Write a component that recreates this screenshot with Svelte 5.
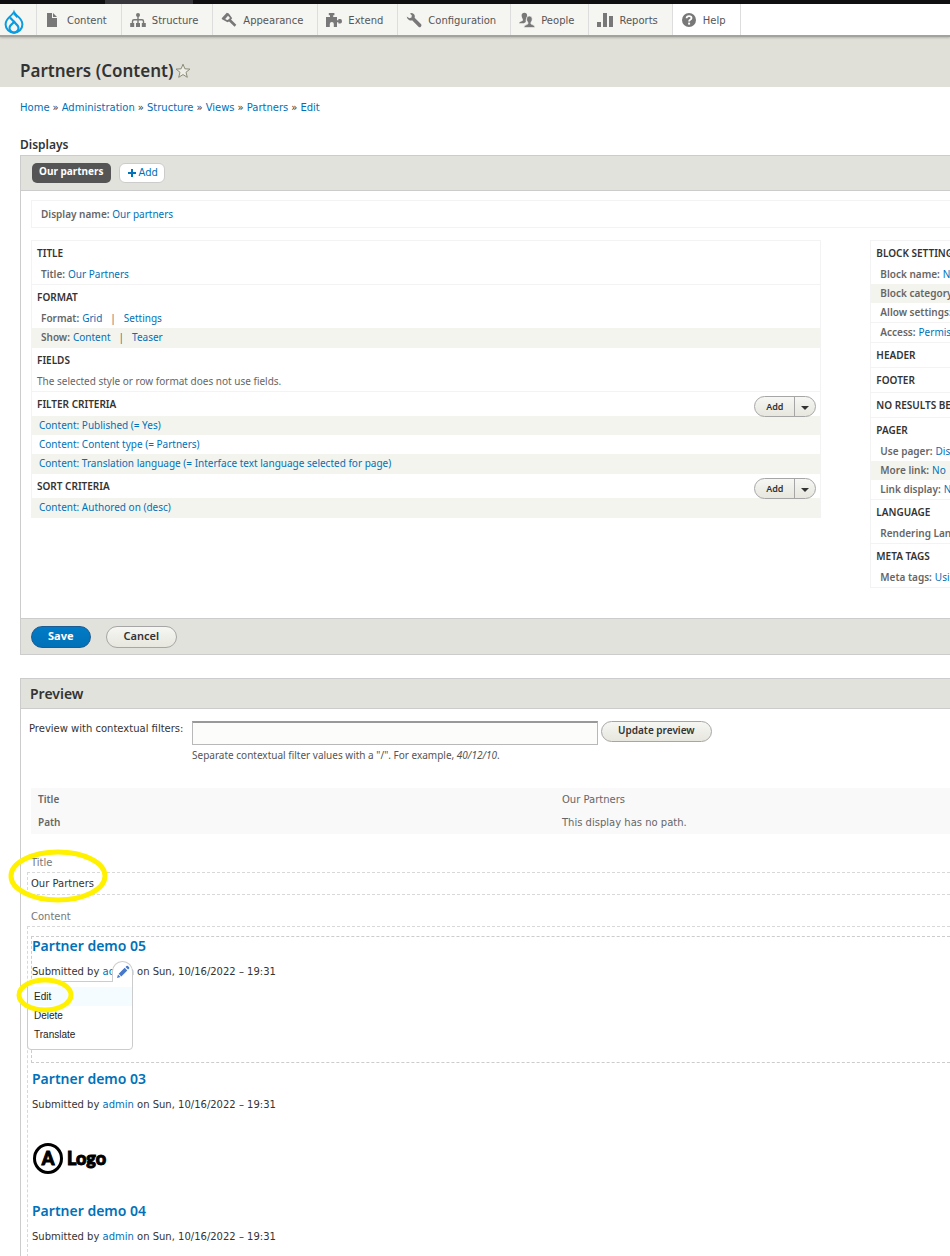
<script>
  const menu = [
    { label: 'Content', icon: 'content' },
    { label: 'Structure', icon: 'structure' },
    { label: 'Appearance', icon: 'appearance' },
    { label: 'Extend', icon: 'extend' },
    { label: 'Configuration', icon: 'configuration' },
    { label: 'People', icon: 'people' },
    { label: 'Reports', icon: 'reports' },
    { label: 'Help', icon: 'help' }
  ];

  const crumbs = ['Home', 'Administration', 'Structure', 'Views', 'Partners', 'Edit'];

  const mainBuckets = [
    { title: 'Title', rows: [{ label: 'Title:', links: ['Our Partners'] }] },
    {
      title: 'Format',
      rows: [
        { label: 'Format:', links: ['Grid', 'Settings'] },
        { label: 'Show:', links: ['Content', 'Teaser'], shaded: true }
      ]
    },
    { title: 'Fields', rows: [{ text: 'The selected style or row format does not use fields.' }] },
    {
      title: 'Filter criteria',
      add: true,
      rows: [
        { links: ['Content: Published (= Yes)'], shaded: true },
        { links: ['Content: Content type (= Partners)'] },
        { links: ['Content: Translation language (= Interface text language selected for page)'], shaded: true }
      ]
    },
    { title: 'Sort criteria', add: true, rows: [{ links: ['Content: Authored on (desc)'], shaded: true }] }
  ];

  const sideBuckets = [
    {
      title: 'Block settings',
      rows: [
        { label: 'Block name:', links: ['None'] },
        { label: 'Block category:', links: ['Lists (Views)'], shaded: true },
        { label: 'Allow settings:', links: ['Items per page'] },
        { label: 'Access:', links: ['Permission'], ruled: true }
      ]
    },
    { title: 'Header', rows: [] },
    { title: 'Footer', rows: [] },
    { title: 'No results behavior', rows: [] },
    {
      title: 'Pager',
      rows: [
        { label: 'Use pager:', links: ['Display all items'] },
        { label: 'More link:', links: ['No'], shaded: true },
        { label: 'Link display:', links: ['None'] }
      ]
    },
    { title: 'Language', rows: [{ label: 'Rendering Language:', links: ['Content language'] }] },
    { title: 'Meta tags', rows: [{ label: 'Meta tags:', links: ['Using defaults'] }] }
  ];

  const submitted = 'on Sun, 10/16/2022 – 19:31';
  let filterValue = $state('');
</script>

{#snippet glyph(name)}
  <svg class="glyph" viewBox="0 0 16 16" width="16" height="16" aria-hidden="true">
    {#if name === 'content'}
      <path d="M2 1h5v5h5v9H2z M8 1l4 4H8z" />
    {:else if name === 'structure'}
      <circle cx="8" cy="3" r="2" />
      <path d="M7.300 4h1.400v3h3.300q2.200 0 2.200 2.200V11h-1.400V9.500q0-1-1-1H8.700V11H7.300V8.500H4.200q-1 0-1 1V11H1.800V9.200Q1.800 7 4 7h3.300z" />
      <path d="M.2 11h4v4h-4zM6 11h4v4H6zM11.800 11h4v4h-4z" />
    {:else if name === 'appearance'}
      <path d="M.7 6.200 5.800.8l2 .7 3.400 4.700-1.200 1.300 5.300 5.300-1.700 1.900-5.500-5.300-1.600.8L1 7.200z" />
      <path d="M4.200 7 7 3.800l2 2.200-2.200 2.100-1.400-.3z" fill="#f5f5f2" />
    {:else if name === 'extend'}
      <path d="M0 5h4V3.200H2.800V1h5.600v2.200H7.200V5H11v3.200h1.400V7h1.800q1.800 0 1.800 2.200 0 2.300-1.800 2.300h-1.800v-1.300H11V15H7.800v-3q0-2-2-2t-2 2v3H0z" />
    {:else if name === 'configuration'}
      <path d="M5.200.9q3.200.3 3.600 3 .1 1-.2 1.800l6.600 6.600q.8 1.800-.6 2.700-1 .6-2.100-.3L6.100 8.300Q4.600 8.900 3 8 .9 6.800.7 4.600l2.700 1.700 2.100-.8.3-2.200L4 1.700z" />
    {:else if name === 'people'}
      <path d="M5.400.7q2.700 0 2.700 2.700 0 1.400-.8 2.500-1 2.100-.5 4l-1.900 1.300H0q.2-1.300 3.300-2.300.8-.4.6-1.500-1.400-2-1.300-4.200Q2.700.7 5.400.7z" />
      <path d="M10.300 4q2.900 0 2.900 3 0 1.800-1.200 3.200-.4 1.700.3 2 3.700.8 3.700 3.300H4.900q0-2.300 3.600-3.200.8-.4.3-2.100Q7.500 8.700 7.500 7q0-3 2.800-3z" stroke="#f5f5f2" stroke-width=".6" />
    {:else if name === 'reports'}
      <path d="M0 10h4v5H0zM6 1h4v14H6zM12 4h4v11h-4z" />
    {:else}
      <circle cx="8" cy="8" r="7" />
      <path d="M5.600 6.300q0-2.200 2.500-2.200 2.400 0 2.400 1.900 0 1.200-1.300 1.800-1.100.6-1.100 1.700" fill="none" stroke="#fff" stroke-width="1.800" />
      <path d="M7.100 10.600h2v2h-2z" fill="#fff" />
    {/if}
  </svg>
{/snippet}

{#snippet bucket(b)}
  <section class="bucket">
    <div class="bucket-head">
      <h3>{b.title}</h3>
      {#if b.add}
        <div class="dropbutton">
          <button type="button">Add</button>
          <button type="button" class="toggle" aria-label="List additional actions"><i></i></button>
        </div>
      {/if}
    </div>
    {#each b.rows as r}
      <div class="row" class:shaded={r.shaded} class:ruled={r.ruled} class:labelled={r.label} class:plain={r.text}>
        {#if r.label}<span class="label">{r.label}</span>{/if}
        {#if r.text}{r.text}{/if}
        {#each r.links ?? [] as l, i}
          {#if i}<span class="bar">|</span>{/if}<a href="#top">{l}</a>
        {/each}
      </div>
    {/each}
  </section>
{/snippet}

<div class="page" id="top">
  <div class="strip"><span></span></div>
  <nav class="toolbar">
    <a class="home" href="#top" aria-label="Drupal">
      <svg viewBox="0 0 20 25" width="20" height="25">
        <path d="M10 .5C9.400 3.200 7.300 5 4.900 7.300 2.600 9.600.6 12 .6 15.400a9.400 9.300 0 0 0 18.800 0c0-3.400-2-5.800-4.300-8.100C12.700 5 10.600 3.200 10 .5z" fill="#0a9be0" />
        <path d="M10 4.500 5.800 8.900C3.800 11 2.600 12.800 2.600 15.400a7.400 7.300 0 0 0 14.800 0c0-2.600-1.200-4.400-3.200-6.500z" fill="#f5f5f2" />
        <path d="m6 8.500 7.500 8a4.400 4.300 0 1 1-7 0L11 12" fill="none" stroke="#0a9be0" stroke-width="2.200" />
        <path d="m10 4.500 3.500 3.800" stroke="#0a9be0" stroke-width="2" />
      </svg>
    </a>
    {#each menu as m}
      <a href="#top" class:open={m.icon === 'help'}>{@render glyph(m.icon)}<span>{m.label}</span></a>
    {/each}
  </nav>

  <header>
    <h1>Partners (Content)</h1>
    <button type="button" class="star" aria-label="Add to shortcuts">
      <svg viewBox="0 0 16 16" width="16" height="16">
        <path d="m8 1.200 1.900 4.600 5 .3-3.900 3.200 1.300 5L8 11.600l-4.300 2.700 1.300-5L1.100 6.100l5-.3z" fill="#eeeee6" stroke="#8c8b78" stroke-linejoin="round" />
      </svg>
    </button>
  </header>

  <main>
    <nav class="crumbs">
      {#each crumbs as c, i}{#if i}<span>»</span>{/if}<a href="#top">{c}</a>{/each}
    </nav>

    <h2 class="displays">Displays</h2>
    <div class="panel">
      <div class="tabs">
        <button type="button" class="tab">Our partners</button>
        <button type="button" class="tab-add">
          <svg viewBox="0 0 8 8" width="8" height="8" aria-hidden="true"><path d="M3 0h2v3h3v2H5v3H3V5H0V3h3z" fill="#0073bb" /></svg>Add
        </button>
      </div>
      <div class="details">
        <div class="display-name"><span class="label">Display name:</span> <a href="#top">Our partners</a></div>
        <div class="columns">
          <div class="column">{#each mainBuckets as b}{@render bucket(b)}{/each}</div>
          <div class="column side">{#each sideBuckets as b}{@render bucket(b)}{/each}</div>
        </div>
      </div>
      <div class="actions">
        <button type="button" class="btn primary">Save</button>
        <button type="button" class="btn">Cancel</button>
      </div>
    </div>

    <div class="panel preview">
      <h2>Preview</h2>
      <form class="filters">
        <label for="args">Preview with contextual filters:</label>
        <div class="field">
          <input id="args" type="text" bind:value={filterValue} />
          <p>Separate contextual filter values with a "/". For example, <em>40/12/10</em>.</p>
        </div>
        <button type="button" class="btn update">Update preview</button>
      </form>

      <table>
        <tbody>
          <tr><th scope="row">Title</th><td>Our Partners</td></tr>
          <tr><th scope="row">Path</th><td>This display has no path.</td></tr>
        </tbody>
      </table>

      <div class="output">
        <div class="region">
          <h4>Title</h4>
          <div class="box title-box">Our Partners</div>
          <svg class="mark mark-title" viewBox="0 0 102 54" width="102" height="54" aria-hidden="true">
            <ellipse cx="51" cy="27" rx="47" ry="24" />
          </svg>
        </div>
        <div class="region">
          <h4>Content</h4>
          <div class="box content-box">
            <article class="active">
              <h3><a href="#top">Partner demo 05</a></h3>
              <p>Submitted by <a href="#top">admin</a> {submitted}</p>
              <div class="contextual">
                <button type="button" class="pencil" aria-label="Open configuration options">
                  <svg viewBox="0 0 14 14" width="14" height="14">
                    <path d="m1 13 1-3.500L4.500 12zM2.700 8.800 8.700 2.800l2.600 2.600-6 6zM9.500 2l1-1q.7-.6 1.400 0l1.200 1.200q.6.700 0 1.400l-1 1z" fill="#4678cc" />
                  </svg>
                </button>
                <ul>
                  <li class="hover"><a href="#top">Edit</a></li>
                  <li><a href="#top">Delete</a></li>
                  <li><a href="#top">Translate</a></li>
                </ul>
                <svg class="mark mark-edit" viewBox="0 0 58 36" width="58" height="36" aria-hidden="true">
                  <ellipse cx="29" cy="18" rx="26" ry="15" />
                </svg>
              </div>
            </article>
            <article>
              <h3><a href="#top">Partner demo 03</a></h3>
              <p>Submitted by <a href="#top">admin</a> {submitted}</p>
              <div class="logo">
                <span class="badge">A</span><span>Logo</span>
              </div>
            </article>
            <article class="last">
              <h3><a href="#top">Partner demo 04</a></h3>
              <p>Submitted by <a href="#top">admin</a> {submitted}</p>
            </article>
          </div>
        </div>
      </div>
    </div>
  </main>
</div>

<style>
  :global(body) {
    background: #fff;
  }
  .page {
    overflow: hidden;
    color: #333;
    font: 10px/20px 'DejaVu Sans', Verdana, sans-serif;
  }
  h1, h2, h3, h4, p, ul {
    margin: 0;
    padding: 0;
    font-weight: 600;
  }
  p, ul { font-weight: 400; }
  h1, h2, h3, .label, .btn, .tab, .dropbutton button, th {
    font-family: 'Noto Sans', 'Open Sans', sans-serif;
  }
  a {
    color: #0071b8;
    text-decoration: none;
  }
  button {
    margin: 0;
    padding: 0;
    border: 0;
    background: none;
    cursor: pointer;
  }

  .strip {
    height: 4px;
    padding-left: 105px;
    background: #0f0f11;
  }
  .strip span {
    display: block;
    width: 88px;
    height: 100%;
    background: #37373b;
  }
  .toolbar {
    position: relative;
    display: flex;
    height: 31px;
    background: #fff;
    box-shadow: 0 2px 0 #a3a39e, 0 3px 2px #b5b5ae;
  }
  .toolbar a {
    display: flex;
    align-items: center;
    gap: 6px;
    padding: 0 14px 0 8px;
    border-right: 1px solid #ddd;
    background: #f5f5f2;
    color: #565656;
  }
  .toolbar a span { padding-top: 2px; }
  .toolbar a.open { background: #fff; }
  .toolbar .home {
    width: 37px;
    box-sizing: border-box;
    padding: 3px 0 0 4px;
  }
  .glyph { fill: #787878; }

  header {
    display: flex;
    align-items: center;
    gap: 2px;
    padding: 24px 20px 4px;
    background: #e0e0d8;
  }
  h1 {
    font-size: 17px;
    line-height: 24px;
  }
  .star svg { display: block; }

  main { padding-left: 20px; }
  .crumbs {
    display: flex;
    gap: 3px;
    padding: 11px 0 17px;
  }
  .displays {
    font-size: 12px;
    line-height: 20px;
  }

  .panel {
    border: 1px solid #ccc;
    border-right: 0;
  }
  .tabs {
    display: flex;
    align-items: center;
    gap: 8px;
    padding: 7px 11px;
    border-bottom: 1px solid #ccc;
    background: #e1e2dc;
  }
  .tab {
    height: 20px;
    padding: 0 7px 3px;
    border-radius: 5px;
    background: #555;
    color: #fff;
    font-size: 10px;
    font-weight: 700;
    line-height: 17px;
  }
  .tab-add {
    display: flex;
    align-items: center;
    gap: 3px;
    height: 20px;
    padding: 0 6px 0 8px;
    border: 1px solid #ccc;
    border-radius: 6px;
    background: #fff;
    color: #0071b8;
    font: 10px/18px 'DejaVu Sans', Verdana, sans-serif;
  }
  .details {
    padding: 9px 0 30px 10px;
    font-family: 'Noto Sans', 'Open Sans', sans-serif;
  }
  .display-name {
    padding: 3px 9px;
    border: 1px solid #f3f3f3;
    border-right: 0;
  }
  .label {
    color: #666;
    font-size: 10px;
    font-weight: 600;
  }
  .columns {
    display: grid;
    grid-template-columns: 86% 280px;
    align-items: start;
    gap: 49px;
    margin-top: 12px;
  }
  .column {
    border: 1px solid #f3f3f3;
    border-top: 0;
    white-space: nowrap;
  }
  .bucket { border-top: 1px solid #f3f3f3; }
  .bucket-head {
    display: flex;
    justify-content: space-between;
    height: 24px;
    padding: 0 4px 0 5px;
  }
  .bucket h3 {
    color: #333;
    font-size: 10px;
    line-height: 25px;
    text-transform: uppercase;
  }
  .row {
    display: flex;
    padding: 0 7px;
    color: #666;
    line-height: 19px;
  }
  .row.labelled {
    gap: 3px;
    padding: 0 9px;
  }
  .row.plain { padding: 0 5px; }
  .row.shaded { background: #f4f4ee; }
  .row.ruled { border-top: 1px solid #f3f3f3; }
  .bar { padding: 0 5px; }
  .dropbutton {
    position: relative;
    display: flex;
    height: 21px;
    box-sizing: border-box;
    margin-top: 4px;
    border: 1px solid #a6a6a6;
    border-radius: 11px;
    background: linear-gradient(#f6f6f3, #e7e7df);
  }
  .dropbutton button {
    width: 39px;
    color: #333;
    font-size: 9px;
    font-weight: 600;
  }
  .dropbutton .toggle {
    width: 21px;
    border-left: 1px solid #a6a6a6;
  }
  .toggle i {
    display: block;
    width: 0;
    margin: 2px auto 0;
    border: 4px solid transparent;
    border-top-color: #333;
    border-bottom: 0;
  }
  .actions {
    display: flex;
    gap: 15px;
    padding: 7px 10px 6px;
    border-top: 1px solid #ccc;
    background: #e1e2dc;
  }
  .btn {
    height: 22px;
    padding: 0 17px 2px;
    border: 1px solid #a6a6a6;
    border-radius: 11px;
    background: linear-gradient(#f6f6f3, #e7e7df);
    color: #333;
    font-size: 11px;
    font-weight: 600;
    line-height: 18px;
  }
  .primary {
    padding: 0 16px 2px;
    border-color: #1e5c90;
    background: linear-gradient(#007bc6, #0071b8);
    color: #fff;
    font-weight: 700;
  }

  .preview {
    margin-top: 23px;
    border-bottom: 0;
  }
  .preview h2 {
    padding: 0 9px;
    border-bottom: 1px solid #ccc;
    background: #e1e2dc;
    font-size: 14px;
    line-height: 29px;
  }
  .filters {
    display: flex;
    align-items: flex-start;
    padding: 12px 8px 0;
  }
  .filters label {
    width: 163px;
    line-height: 16px;
    white-space: nowrap;
  }
  .field { width: 406px; }
  .field input {
    display: block;
    width: 100%;
    height: 24px;
    box-sizing: border-box;
    border: 1px solid #b8b8b8;
    border-top: 2px solid #999;
    background: #fcfcfa;
  }
  .field p {
    color: #555;
    font-family: 'Noto Sans', 'Open Sans', sans-serif;
    white-space: nowrap;
  }
  .update {
    height: 21px;
    margin-left: 3px;
    padding: 0 16px 2px;
    font-size: 10px;
    line-height: 17px;
  }

  table {
    width: calc(100% + 119px);
    margin: 23px 0 0 10px;
    border-collapse: collapse;
    background: #f9f9f9;
    color: #666;
    table-layout: fixed;
  }
  th, td {
    height: 23px;
    padding: 0 7px;
    line-height: 21px;
    text-align: left;
  }
  th { font-weight: 600; }

  .output { padding: 19px 0 0 6px; }
  .region { position: relative; }
  .region + .region { margin-top: 12px; }
  .region h4 {
    padding-left: 4px;
    color: #777;
    font-weight: 400;
    line-height: 19px;
  }
  .box {
    border: 1px dashed #d8d8d8;
    border-right: 0;
  }
  .title-box { padding: 1px 0 0 3px; }
  .content-box {
    padding: 9px 0 0 3px;
    border-bottom: 0;
  }
  article {
    position: relative;
    height: 131px;
    padding: 1px 0 0 1px;
  }
  article.active {
    height: 125px;
    margin-bottom: 6px;
    padding: 0;
    border: 1px dashed #ccc;
    border-right: 0;
  }
  article.last {
    height: auto;
    padding-bottom: 10px;
  }
  article h3 {
    font-size: 14px;
    line-height: 17px;
  }
  article p { padding-top: 8px; }
  .contextual {
    position: absolute;
    top: 24px;
    left: -5px;
    width: 106px;
  }
  .pencil {
    position: relative;
    z-index: 1;
    display: flex;
    justify-content: center;
    align-items: center;
    width: 21px;
    height: 21px;
    margin: 0 0 -1px auto;
    border: 1px solid #ccc;
    border-bottom: 0;
    border-radius: 11px 11px 0 0;
    background: #fff;
  }
  .contextual ul {
    padding: 5px 0;
    border: 1px solid #ccc;
    border-radius: 0 0 4px 4px;
    background: #fff;
    list-style: none;
    font-family: 'Liberation Sans', Arial, sans-serif;
    line-height: 19px;
  }
  .contextual li { padding: 0 6px; }
  .contextual li a { color: #222; }
  .contextual .hover { background: #f5fcff; }
  .mark {
    position: absolute;
    z-index: 2;
    fill: none;
    stroke: #fff100;
    stroke-width: 5;
    pointer-events: none;
  }
  .mark-title {
    top: -4px;
    left: -20px;
  }
  .mark-edit {
    top: 16px;
    left: -11px;
  }
  .logo {
    display: flex;
    align-items: center;
    gap: 4px;
    margin: 27px 0 0 1px;
    color: #000;
    font: 900 18px/32px Lato, sans-serif;
    -webkit-text-stroke: 1px #000;
  }
  .badge {
    width: 24px;
    height: 25px;
    border: 3px solid #000;
    border-radius: 50%;
    line-height: 24px;
    text-align: center;
  }
</style>
